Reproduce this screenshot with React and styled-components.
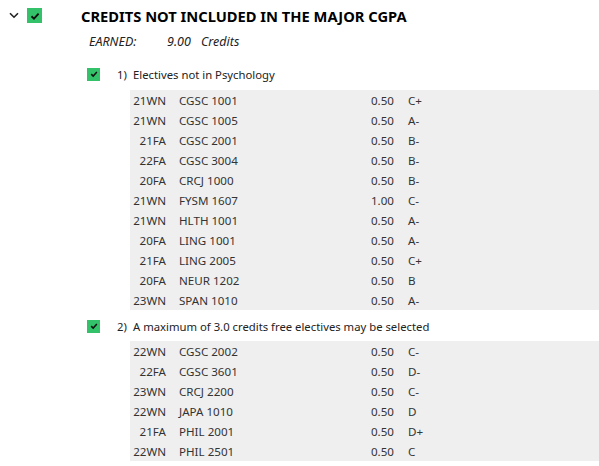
import React from "react";
import styled, { createGlobalStyle } from "styled-components";

const Global = createGlobalStyle`
  html, body { margin: 0; padding: 0; background: #fff; }
  body { font-family: "Segoe UI", "Noto Sans", "Open Sans", sans-serif; color: #333; }
`;

const Page = styled.div`
  width: 599px;
  display: flex;
  flex-direction: column;
`;

const Header = styled.div`
  display: flex;
  align-items: center;
  height: 31px;
  padding-left: 9px;
`;

const Chevron = styled.svg`
  width: 10px;
  height: 7px;
  margin-right: 8px;
`;

const Box = styled.span`
  display: inline-flex;
  align-items: center;
  justify-content: center;
  width: ${(p) => p.$size}px;
  height: ${(p) => p.$size}px;
  background: #33c26a;
  flex-shrink: 0;
  svg { width: ${(p) => p.$size - 5}px; height: ${(p) => p.$size - 5}px; }
`;

const Title = styled.div`
  margin-left: 39px;
  font-size: 14.7px;
  font-weight: 700;
  color: #000;
`;

const Earned = styled.div`
  display: flex;
  align-items: center;
  height: 20px;
  padding-left: 89px;
  font-style: italic;
  font-size: 12.5px;
  color: #222;
`;

const EarnedLabel = styled.span`
  width: ${(p) => p.$w}px;
`;

const Group = styled.div`
  display: flex;
  flex-direction: column;
  margin-top: ${(p) => p.$top}px;
`;

const GroupHeader = styled.div`
  display: flex;
  align-items: center;
  height: 24px;
  padding-left: 87px;
  font-size: 11.3px;
  color: #222;
  margin-bottom: ${(p) => p.$gap}px;
`;

const GroupNum = styled.span`
  margin-left: 17px;
  width: 16px;
`;

const Table = styled.div`
  margin-left: 130px;
  background: #efefef;
  display: flex;
  flex-direction: column;
`;

const Row = styled.div`
  display: grid;
  grid-template-columns: 36px 172px 28px 1fr;
  column-gap: 14px;
  height: 20px;
  align-items: center;
  font-size: 11.6px;
  color: #333;
  white-space: nowrap;
`;

const Term = styled.span`
  text-align: right;
`;

const Course = styled.span`
  margin-left: -1px;
`;

const Credits = styled.span`
  text-align: right;
`;

const Check = () => (
  <svg viewBox="0 0 10 10">
    <path d="M1.5 5.2 L4 7.6 L8.6 2.6" fill="none" stroke="#111" strokeWidth="1.9" />
  </svg>
);

const g1 = [
  ["21WN", "CGSC 1001", "0.50", "C+"],
  ["21WN", "CGSC 1005", "0.50", "A-"],
  ["21FA", "CGSC 2001", "0.50", "B-"],
  ["22FA", "CGSC 3004", "0.50", "B-"],
  ["20FA", "CRCJ 1000", "0.50", "B-"],
  ["21WN", "FYSM 1607", "1.00", "C-"],
  ["21WN", "HLTH 1001", "0.50", "A-"],
  ["20FA", "LING 1001", "0.50", "A-"],
  ["21FA", "LING 2005", "0.50", "C+"],
  ["20FA", "NEUR 1202", "0.50", "B"],
  ["23WN", "SPAN 1010", "0.50", "A-"],
];

const g2 = [
  ["22WN", "CGSC 2002", "0.50", "C-"],
  ["22FA", "CGSC 3601", "0.50", "D-"],
  ["23WN", "CRCJ 2200", "0.50", "C-"],
  ["22WN", "JAPA 1010", "0.50", "D"],
  ["21FA", "PHIL 2001", "0.50", "D+"],
  ["22WN", "PHIL 2501", "0.50", "C"],
];

const Courses = ({ rows }) => (
  <Table>
    {rows.map((r, i) => (
      <Row key={i}>
        <Term>{r[0]}</Term>
        <Course>{r[1]}</Course>
        <Credits>{r[2]}</Credits>
        <span>{r[3]}</span>
      </Row>
    ))}
  </Table>
);

export default function App() {
  return (
    <Page>
      <Global />
      <Header>
        <Chevron viewBox="0 0 10 7">
          <path d="M1 1.2 L5 5.2 L9 1.2" fill="none" stroke="#222" strokeWidth="1.6" />
        </Chevron>
        <Box $size={15}><Check /></Box>
        <Title>CREDITS NOT INCLUDED IN THE MAJOR CGPA</Title>
      </Header>
      <Earned>
        <EarnedLabel $w={78}>EARNED:</EarnedLabel>
        <EarnedLabel $w={34}>9.00</EarnedLabel>
        <span>Credits</span>
      </Earned>
      <Group $top={11}>
        <GroupHeader $gap={4}>
          <Box $size={13}><Check /></Box>
          <GroupNum>1)</GroupNum>
          <span>Electives not in Psychology</span>
        </GroupHeader>
        <Courses rows={g1} />
      </Group>
      <Group $top={4}>
        <GroupHeader $gap={3}>
          <Box $size={13}><Check /></Box>
          <GroupNum>2)</GroupNum>
          <span>A maximum of 3.0 credits free electives may be selected</span>
        </GroupHeader>
        <Courses rows={g2} />
      </Group>
    </Page>
  );
}
